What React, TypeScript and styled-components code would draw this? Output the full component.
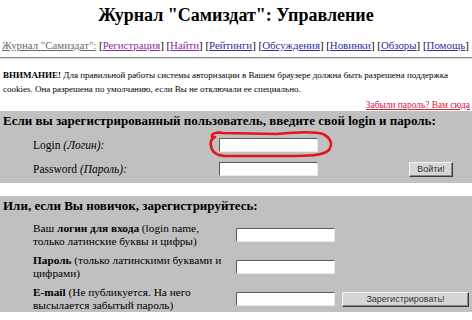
import React from "react"
import styled, { createGlobalStyle } from "styled-components"

const GlobalStyle = createGlobalStyle`
  html, body {
    margin: 0;
    padding: 0;
    background: #ffffff;
  }
  body {
    font-family: "Liberation Serif", "Times New Roman", serif;
    color: #000;
    width: 472px;
    height: 320px;
    overflow: hidden;
  }
`

const Page = styled.div`
  display: flex;
  flex-direction: column;
`

const Title = styled.h1`
  margin: 4px 0 0;
  font-size: 18px;
  line-height: 22px;
  font-weight: bold;
  text-align: center;
`

const Nav = styled.div`
  margin-top: 13px;
  padding-left: 2px;
  font-size: 10.85px;
  line-height: 13px;
  white-space: nowrap;
`

const Home = styled.a`
  color: #6a6a6a;
  text-decoration: underline;
`

const NavLink = styled.a<{ $visited?: boolean }>`
  color: ${({ $visited }) => ($visited ? "#8b2f9b" : "#2f2fa0")};
  text-decoration: underline;
`

const Rule = styled.hr`
  margin: 5px 0 0;
  border: 0;
  border-top: 1px solid #8a8a8a;
  border-bottom: 1px solid #d8d8d8;
`

const Notice = styled.p`
  margin: 9px 0 0;
  padding: 0 3px;
  font-size: 9px;
  line-height: 14px;
`

const Forgot = styled.div`
  margin-top: 3px;
  padding-right: 2px;
  text-align: right;
  font-size: 9.4px;
  line-height: 13px;
  white-space: nowrap;
  a {
    color: #d2203c;
    text-decoration: underline;
  }
`

const Panel = styled.section<{ $top: number; $height: number }>`
  margin-top: ${({ $top }) => $top}px;
  height: ${({ $height }) => $height}px;
  background: #c0c0c0;
  display: flex;
  flex-direction: column;
`

const PanelHead = styled.h2`
  margin: 0;
  padding: 2px 0 0 3px;
  font-size: 13px;
  line-height: 16px;
  font-weight: bold;
  white-space: nowrap;
`

const LoginGrid = styled.div`
  display: grid;
  grid-template-columns: 219px 99px 1fr;
  grid-auto-rows: 24px;
  margin-top: 4px;
  align-items: center;
`

const Label = styled.div`
  padding-left: 33px;
  font-size: 11.5px;
  line-height: 14px;
  white-space: nowrap;
  i {
    font-style: italic;
  }
`

const Field = styled.div`
  position: relative;
  display: flex;
`

const TextBox = styled.input`
  box-sizing: border-box;
  width: 99px;
  height: 14px;
  margin: 0;
  padding: 0;
  background: #fff;
  border: 1px solid #fff;
  border-top-color: #5a5a5a;
  border-left-color: #5a5a5a;
  border-right-color: #e8e8e8;
  border-bottom-color: #e8e8e8;
`

const Circle = styled.svg`
  position: absolute;
  left: -12px;
  top: -8px;
  width: 126px;
  height: 29px;
  pointer-events: none;
`

const ButtonCell = styled.div`
  display: flex;
  justify-content: flex-end;
  padding-right: 19px;
`

const Button = styled.button<{ $width: number }>`
  box-sizing: border-box;
  width: ${({ $width }) => $width}px;
  height: 15px;
  padding: 0;
  font-family: "Liberation Sans", Arial, sans-serif;
  font-size: 9px;
  color: #333;
  background: #d6d6d6;
  border: 1px solid #3c3c3c;
  border-top-color: #f4f4f4;
  border-left-color: #f4f4f4;
  box-shadow: inset -1px -1px 0 #888;
`

const RegGrid = styled.div`
  display: grid;
  grid-template-columns: 236px 98px 1fr;
  grid-auto-rows: 32px;
  margin-top: 5px;
  align-items: center;
`

const RegLabel = styled.div`
  padding-left: 33px;
  padding-right: 4px;
  font-size: 11.3px;
  line-height: 13px;
`

const RegButtonCell = styled.div`
  display: flex;
  padding-left: 8px;
`

export default function App() {
  return (
    <Page>
      <GlobalStyle />
      <Title>Журнал "Самиздат": Управление</Title>
      <Nav>
        <Home href="#">Журнал "Самиздат":</Home>{" "}
        [<NavLink $visited href="#">Регистрация</NavLink>]{" "}
        [<NavLink $visited href="#">Найти</NavLink>]{" "}
        [<NavLink href="#">Рейтинги</NavLink>]{" "}
        [<NavLink href="#">Обсуждения</NavLink>]{" "}
        [<NavLink href="#">Новинки</NavLink>]{" "}
        [<NavLink href="#">Обзоры</NavLink>]{" "}
        [<NavLink href="#">Помощь</NavLink>]
      </Nav>
      <Rule />
      <Notice>
        <b>ВНИМАНИЕ!</b> Для правильной работы системы авторизации в Вашем браузере должна быть разрешена поддержка
        cookies. Она разрешена по умолчанию, если Вы не отключали ее специально.
      </Notice>
      <Forgot>
        <a href="#">Забыли пароль? Вам сюда</a>
      </Forgot>

      <Panel $top={-1} $height={72}>
        <PanelHead>Если вы зарегистрированный пользователь, введите свой login и пароль:</PanelHead>
        <LoginGrid>
          <Label>
            Login <i>(Логин):</i>
          </Label>
          <Field>
            <TextBox />
            <Circle viewBox="0 0 126 29">
              <path
                d="M5 7 C4 3 10 2 16 3 L70 4 C90 2 106 1 116 4 C124 8 126 14 122 20 C116 26 100 26 80 26 L20 26 C10 26 5 22 4 16 C3 12 4 9 8 7"
                fill="none"
                stroke="#e3141b"
                strokeWidth="2.6"
                strokeLinecap="round"
                strokeLinejoin="round"
              />
            </Circle>
          </Field>
          <div />
          <Label>
            Password <i>(Пароль):</i>
          </Label>
          <Field>
            <TextBox type="password" />
          </Field>
          <ButtonCell>
            <Button $width={44}>Войти!</Button>
          </ButtonCell>
        </LoginGrid>
      </Panel>

      <Panel $top={13} $height={116}>
        <PanelHead>Или, если Вы новичок, зарегистрируйтесь:</PanelHead>
        <RegGrid>
          <RegLabel>
            Ваш <b>логин для входа</b> (login name, только латинские буквы и цифры)
          </RegLabel>
          <Field>
            <TextBox />
          </Field>
          <div />
          <RegLabel>
            <b>Пароль</b> (только латинскими буквами и цифрами)
          </RegLabel>
          <Field>
            <TextBox type="password" />
          </Field>
          <div />
          <RegLabel>
            <b>E-mail</b> (Не публикуется. На него высылается забытый пароль)
          </RegLabel>
          <Field>
            <TextBox />
          </Field>
          <RegButtonCell>
            <Button $width={127}>Зарегистрировать!</Button>
          </RegButtonCell>
        </RegGrid>
      </Panel>
    </Page>
  )
}
